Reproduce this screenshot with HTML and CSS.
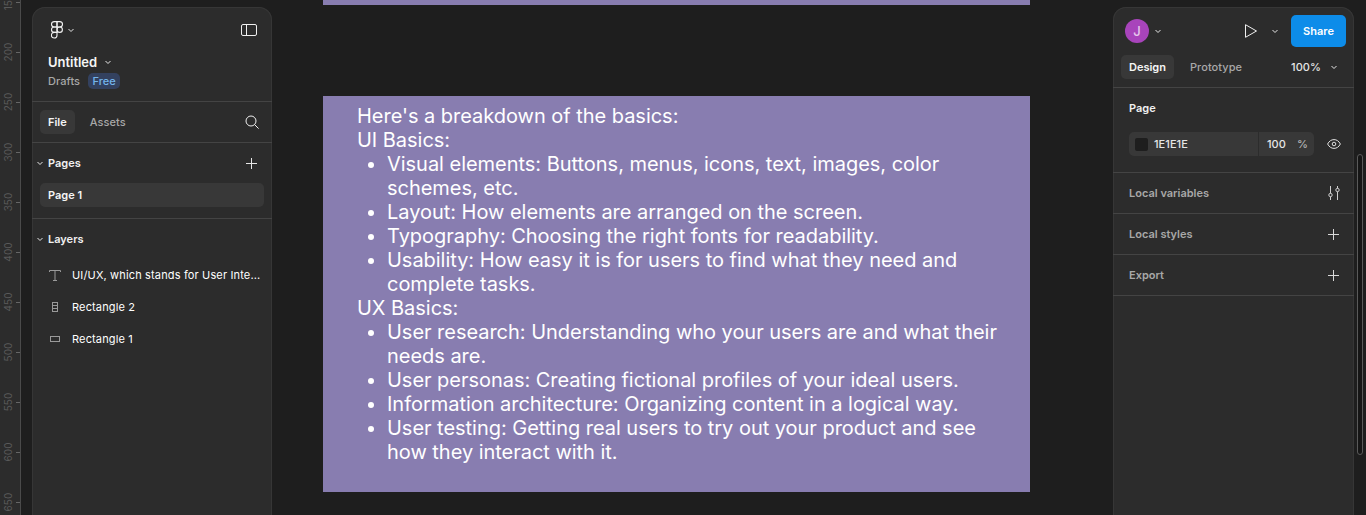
FILE: index.html
```html
<!DOCTYPE html>
<html lang="en">
<head>
<meta charset="utf-8">
<title>Untitled – Figma</title>
<link rel="stylesheet" href="styles.css">
</head>
<body>
<div class="app">
  <div class="ruler">
    <div class="tick first"><span>150</span></div>
    <div class="tick"><span>200</span></div>
    <div class="tick"><span>250</span></div>
    <div class="tick"><span>300</span></div>
    <div class="tick"><span>350</span></div>
    <div class="tick"><span>400</span></div>
    <div class="tick"><span>450</span></div>
    <div class="tick"><span>500</span></div>
    <div class="tick"><span>550</span></div>
    <div class="tick"><span>600</span></div>
    <div class="tick"><span>650</span></div>
  </div>

  <div class="frame frame-top"></div>
  <div class="frame frame-main">
    <p>Here's a breakdown of the basics:</p>
    <p>UI Basics:</p>
    <ul>
      <li>Visual elements: Buttons, menus, icons, text, images, color schemes, etc.</li>
      <li>Layout: How elements are arranged on the screen.</li>
      <li>Typography: Choosing the right fonts for readability.</li>
      <li>Usability: How easy it is for users to find what they need and complete tasks.</li>
    </ul>
    <p>UX Basics:</p>
    <ul>
      <li>User research: Understanding who your users are and what their needs are.</li>
      <li>User personas: Creating fictional profiles of your ideal users.</li>
      <li>Information architecture: Organizing content in a logical way.</li>
      <li>User testing: Getting real users to try out your product and see how they interact with it.</li>
    </ul>
  </div>

  <aside class="panel panel-left">
    <section class="file-head">
      <div class="logo-row">
        <div class="logo-btn">
          <svg class="ico-logo" width="12" height="18" viewBox="0 0 12 18" fill="none" stroke="#f2f2f2" stroke-width="1.1">
            <path d="M6 .6H3.2a2.600 2.600 0 0 0 0 5.400H6z"/>
            <path d="M6 .6h2.800a2.600 2.600 0 0 1 0 5.400H6z"/>
            <path d="M6 6H3.200a2.700 2.700 0 0 0 0 5.400H6z"/>
            <circle cx="8.700" cy="8.700" r="2.700"/>
            <path d="M6 11.400H3.200a2.800 2.800 0 1 0 2.800 2.800z"/>
          </svg>
          <svg class="chev" width="8" height="8" viewBox="0 0 8 8"><path d="M1.500 3 4 5.500 6.500 3" fill="none" stroke="#e6e6e6" stroke-width="1"/></svg>
        </div>
        <svg width="16" height="12" viewBox="0 0 16 12" fill="none" stroke="#f0f0f0" stroke-width="1"><rect x=".5" y=".5" width="15" height="11" rx="1.500"/><path d="M5.500 .5v11"/></svg>
      </div>
      <div class="title-row">
        <span class="title">Untitled</span>
        <svg class="chev" width="8" height="8" viewBox="0 0 8 8"><path d="M1.500 3 4 5.500 6.500 3" fill="none" stroke="#e6e6e6" stroke-width="1"/></svg>
      </div>
      <div class="sub-row">
        <span class="muted">Drafts</span>
        <span class="badge">Free</span>
      </div>
    </section>

    <section class="tabs-row tabs-left">
      <span class="pill">File</span>
      <span class="tab">Assets</span>
      <svg class="push" width="14" height="14" viewBox="0 0 14 14" fill="none" stroke="#f0f0f0" stroke-width="1"><circle cx="6" cy="6" r="5"/><path d="m9.600 9.600 4 4"/></svg>
    </section>

    <section class="pages">
      <div class="sec-head">
        <svg class="chev" width="8" height="8" viewBox="0 0 8 8"><path d="M1.500 3 4 5.500 6.500 3" fill="none" stroke="#e6e6e6" stroke-width="1"/></svg>
        <span class="strong">Pages</span>
        <svg class="push plus" width="11" height="11" viewBox="0 0 11 11" stroke="#e6e6e6" stroke-width="1"><path d="M5.500 0v11M0 5.500h11"/></svg>
      </div>
      <div class="page-item">Page 1</div>
    </section>

    <section class="layers">
      <div class="sec-head">
        <svg class="chev" width="8" height="8" viewBox="0 0 8 8"><path d="M1.500 3 4 5.500 6.500 3" fill="none" stroke="#e6e6e6" stroke-width="1"/></svg>
        <span class="strong">Layers</span>
      </div>
      <div class="layer">
        <span class="layer-ico"><svg width="12" height="11" viewBox="0 0 12 11" fill="none" stroke="#9a9a9a" stroke-width="1"><path d="M.5 2V.5h11V2M6 .5v10M4 10.500h4"/></svg></span>
        <span class="layer-name">UI/UX, which stands for User Inte...</span>
      </div>
      <div class="layer">
        <span class="layer-ico"><svg width="6" height="10" viewBox="0 0 6 10" fill="none" stroke="#9a9a9a" stroke-width="1"><rect x=".5" y=".5" width="5" height="9"/><path d="M.5 3.500h5M.5 6.500h5"/></svg></span>
        <span class="layer-name">Rectangle 2</span>
      </div>
      <div class="layer">
        <span class="layer-ico"><svg width="10" height="6" viewBox="0 0 10 6" fill="none" stroke="#9a9a9a" stroke-width="1"><rect x=".5" y=".5" width="9" height="5"/></svg></span>
        <span class="layer-name">Rectangle 1</span>
      </div>
    </section>
  </aside>

  <aside class="panel panel-right">
    <section class="right-head">
      <div class="action-row">
        <span class="avatar">J</span>
        <svg class="chev avatar-chev" width="8" height="8" viewBox="0 0 8 8"><path d="M1.500 3 4 5.500 6.500 3" fill="none" stroke="#e6e6e6" stroke-width="1"/></svg>
        <svg class="play" width="12" height="14" viewBox="0 0 12 14" fill="none" stroke="#f0f0f0" stroke-width="1"><path d="M.5.700v12.600L11.500 7z" stroke-linejoin="round"/></svg>
        <svg class="chev play-chev" width="8" height="8" viewBox="0 0 8 8"><path d="M1.500 3 4 5.500 6.500 3" fill="none" stroke="#e6e6e6" stroke-width="1"/></svg>
        <span class="share">Share</span>
      </div>
      <div class="tabs-row tabs-right">
        <span class="pill">Design</span>
        <span class="tab">Prototype</span>
        <span class="zoom">100%</span>
        <svg class="chev" width="8" height="8" viewBox="0 0 8 8"><path d="M1.500 3 4 5.500 6.500 3" fill="none" stroke="#e6e6e6" stroke-width="1"/></svg>
      </div>
    </section>

    <section class="page-sec">
      <div class="page-label">Page</div>
      <div class="fill-row">
        <div class="fill-input">
          <div class="fill-color"><span class="swatch"></span><span>1E1E1E</span></div>
          <div class="fill-alpha"><span>100</span><span class="pct">%</span></div>
        </div>
        <svg width="14" height="10" viewBox="0 0 14 10" fill="none" stroke="#e0e0e0" stroke-width="1"><path d="M.6 5C2.200 2 4.400.6 7 .6S11.800 2 13.400 5C11.800 8 9.600 9.400 7 9.400S2.200 8 .6 5z"/><circle cx="7" cy="5" r="1.800"/></svg>
      </div>
    </section>

    <section class="prop-row">
      <span class="prop-label">Local variables</span>
      <svg width="12" height="14" viewBox="0 0 12 14" fill="none" stroke="#cfcfcf" stroke-width="1"><path d="M2.500 0v7.500M2.500 10.500V14M9.500 0v2.500M9.500 5.500V14"/><circle cx="2.500" cy="9" r="1.700"/><circle cx="9.500" cy="4" r="1.700"/></svg>
    </section>
    <section class="prop-row">
      <span class="prop-label">Local styles</span>
      <svg class="prop-plus" width="11" height="11" viewBox="0 0 11 11" stroke="#d8d8d8" stroke-width="1"><path d="M5.500 0v11M0 5.500h11"/></svg>
    </section>
    <section class="prop-row">
      <span class="prop-label">Export</span>
      <svg class="prop-plus" width="11" height="11" viewBox="0 0 11 11" stroke="#d8d8d8" stroke-width="1"><path d="M5.500 0v11M0 5.500h11"/></svg>
    </section>
  </aside>

  <div class="scrollbar"></div>
</div>
</body>
</html>
```

FILE: styles.css
```css
* { box-sizing: border-box; }

html, body {
  margin: 0;
  height: 100%;
  overflow: hidden;
  background: #1e1e1e;
}

body {
  font-family: Inter, "Liberation Sans", sans-serif;
  font-size: 11px;
  letter-spacing: 0.055px;
  color: #f5f5f5;
}

.app {
  position: relative;
  width: 1366px;
  height: 515px;
  overflow: hidden;
  background: #1e1e1e;
}

/* ruler */
.ruler {
  width: 21px;
  height: 100%;
  background: #2c2c2c;
  border-right: 1px solid #4a4a4a;
  display: flex;
  flex-direction: column;
}

.tick {
  position: relative;
  flex: 0 0 50px;
  height: 50px;
}

.tick::after {
  content: "";
  position: absolute;
  right: 0;
  top: 0;
  width: 4px;
  height: 1px;
  background: #666;
}

.tick.first {
  flex-basis: 52px;
  height: 52px;
}

.tick.first::after {
  top: 2px;
}

.tick span {
  position: absolute;
  left: 7.5px;
  top: -6px;
  font-size: 10px;
  line-height: 12px;
  color: #595959;
  transform: translate(-50%, 0) rotate(-90deg);
}

.tick.first span {
  top: -4px;
}

/* canvas frames */
.frame {
  position: absolute;
  left: 323px;
  width: 707px;
  background: #887db0;
}

.frame-top {
  top: 0;
  height: 5px;
}

.frame-main {
  top: 96px;
  height: 396px;
  padding: 8px 24px 0 34px;
  font-size: 20px;
  font-weight: 380;
  line-height: 24px;
  letter-spacing: -0.03px;
  font-optical-sizing: none;
  color: #fff;
}

.frame-main p,
.frame-main ul {
  margin: 0;
}

.frame-main ul {
  padding-left: 30px;
}

/* floating panels */
.panel {
  position: absolute;
  top: 7px;
  bottom: -20px;
  background: #2c2c2c;
  border-radius: 13px 13px 0 0;
  box-shadow: inset 0 0 0 1px #363636;
}

.panel-left {
  left: 32px;
  width: 240px;
}

.panel-right {
  left: 1113px;
  width: 241px;
}

.file-head {
  height: 95px;
  padding: 12px 15px 0 16px;
  border-bottom: 1px solid #444;
}

.logo-row {
  height: 22px;
  display: flex;
  align-items: center;
  justify-content: space-between;
}

.logo-btn {
  display: flex;
  align-items: center;
  gap: 4px;
  padding-left: 3px;
}

.chev {
  flex: none;
}

.title-row {
  height: 18px;
  margin-top: 12px;
  display: flex;
  align-items: center;
  gap: 7px;
}

.title {
  font-size: 13px;
  font-weight: 600;
  letter-spacing: -0.03px;
  color: #f5f5f5;
}

.sub-row {
  height: 16px;
  margin-top: 2px;
  display: flex;
  align-items: center;
  gap: 8px;
}

.muted {
  font-weight: 500;
  color: #a8a8a8;
}

.badge {
  width: 32px;
  height: 16px;
  line-height: 16px;
  text-align: center;
  border-radius: 5px;
  font-weight: 500;
  color: #74b4ec;
  background: #33415f;
}

.tabs-row {
  display: flex;
  align-items: center;
}

.tabs-left {
  height: 41px;
  padding: 0 13px 0 8px;
  border-bottom: 1px solid #444;
}

.pill {
  height: 24px;
  line-height: 24px;
  padding: 0 8px;
  border-radius: 5px;
  font-weight: 600;
  letter-spacing: 0;
  color: #f5f5f5;
  background: #383838;
}

.tab {
  margin-left: 7px;
  padding: 0 8px;
  font-weight: 500;
  color: #a8a8a8;
}

.push {
  margin-left: auto;
}

.pages {
  height: 76px;
  border-bottom: 1px solid #444;
}

.sec-head {
  height: 40px;
  padding: 0 15px 0 4px;
  display: flex;
  align-items: center;
  gap: 4px;
}

.strong {
  font-weight: 600;
  letter-spacing: 0;
  color: #f0f0f0;
}

.page-item {
  height: 24px;
  margin: 0 8px;
  padding: 0 8px;
  line-height: 24px;
  border-radius: 5px;
  font-weight: 600;
  letter-spacing: 0;
  color: #f5f5f5;
  background: #383838;
}

.layer {
  height: 32px;
  display: flex;
  align-items: center;
}

.layer-ico {
  width: 40px;
  display: flex;
  justify-content: center;
  padding-left: 6px;
  flex: none;
}

.layer-name {
  font-weight: 400;
  letter-spacing: 0.15px;
  color: #fff;
  white-space: nowrap;
}

/* right panel */
.right-head {
  height: 81px;
  padding: 8px 8px 0;
  border-bottom: 1px solid #444;
}

.action-row {
  height: 32px;
  display: flex;
  align-items: center;
}

.avatar {
  width: 24px;
  height: 24px;
  margin-left: 4px;
  border-radius: 50%;
  background: #a844bb;
  color: #e6c8ec;
  font-size: 13px;
  font-weight: 500;
  line-height: 24px;
  text-align: center;
}

.avatar-chev {
  margin-left: 5px;
}

.play {
  margin-left: auto;
}

.play-chev {
  margin-left: 14px;
  margin-right: 12px;
}

.share {
  width: 55px;
  height: 32px;
  line-height: 32px;
  text-align: center;
  border-radius: 5px;
  background: #0d8ce9;
  color: #fff;
  font-weight: 600;
  letter-spacing: 0;
}

.tabs-right {
  height: 24px;
  margin-top: 8px;
}

.tabs-right .tab {
  margin-left: 8px;
}

.zoom {
  margin-left: auto;
  margin-right: 9px;
  font-weight: 500;
  color: #e6e6e6;
}

.tabs-right .chev {
  margin-right: 8px;
}

.page-sec {
  height: 85px;
  padding: 0 13px 0 16px;
  border-bottom: 1px solid #444;
}

.page-label {
  height: 40px;
  line-height: 40px;
  font-weight: 600;
  letter-spacing: 0;
  color: #f0f0f0;
}

.fill-row {
  height: 24px;
  margin-top: 4px;
  display: flex;
  align-items: center;
  justify-content: space-between;
}

.fill-input {
  width: 185px;
  height: 24px;
  display: flex;
  border-radius: 5px;
  background: #383838;
  font-weight: 500;
  color: #e6e6e6;
}

.fill-color {
  width: 130px;
  padding-left: 6px;
  display: flex;
  align-items: center;
  gap: 6px;
  border-right: 1px solid #2c2c2c;
}

.swatch {
  width: 13px;
  height: 13px;
  border-radius: 2px;
  background: #1e1e1e;
}

.fill-alpha {
  flex: 1;
  display: flex;
  align-items: center;
  padding-left: 8px;
  gap: 11px;
}

.pct {
  color: #b5b5b5;
}

.prop-row {
  height: 41px;
  padding: 0 14px 0 16px;
  display: flex;
  align-items: center;
  justify-content: space-between;
  border-bottom: 1px solid #444;
}

.prop-label {
  font-weight: 600;
  letter-spacing: 0;
  color: #a8a8a8;
}

.prop-plus {
  margin-right: 1px;
}

/* scrollbar */
.scrollbar {
  position: absolute;
  left: 1357px;
  top: 154px;
  width: 6px;
  height: 301px;
  border: 1px solid #5a5a5a;
  border-radius: 3px;
  background: #161616;
}
```
